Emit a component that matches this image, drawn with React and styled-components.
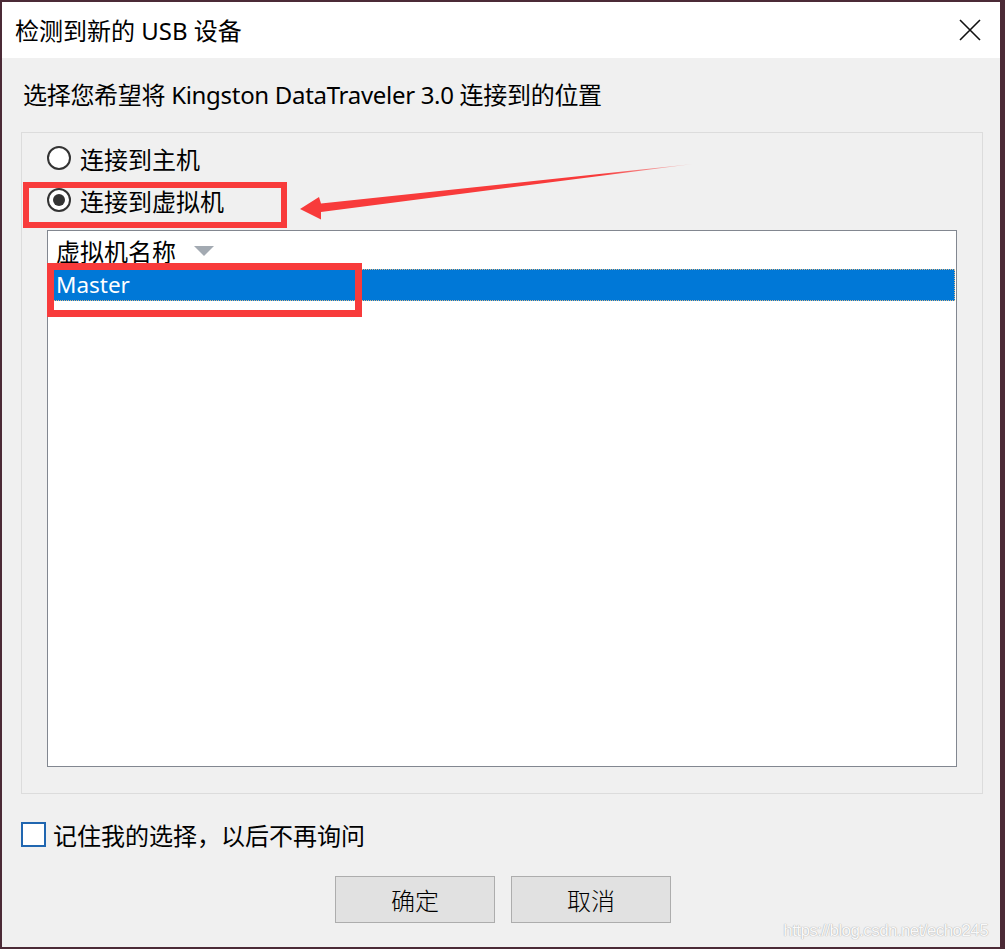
import React from "react";
import styled, { createGlobalStyle } from "styled-components";

const Global = createGlobalStyle`
  html, body { margin: 0; padding: 0; background: #f0f0f0; }
  body { font-family: "Noto Sans", "Noto Sans CJK SC", sans-serif; }
  * { box-sizing: border-box; }
`;

const Window = styled.div`
  position: relative;
  width: 1005px;
  height: 949px;
  border: 2px solid #4b2a36;
  border-right-width: 5px;
  display: flex;
  flex-direction: column;
  background: #f0f0f0;
  color: #000;
  font-size: 24px;
`;

const TitleBar = styled.div`
  height: 56px;
  flex: none;
  background: #fff;
  display: flex;
  align-items: center;
  justify-content: space-between;
  padding: 0 0 0 13px;
`;

const Title = styled.div`
  font-size: 24px;
  line-height: 32px;
  margin-top: 1px;
`;

const CloseButton = styled.div`
  width: 58px;
  height: 56px;
  display: flex;
  align-items: center;
  justify-content: center;
  margin-right: 1px;
`;

const Body = styled.div`
  flex: 1;
  display: flex;
  flex-direction: column;
  padding: 21px 17px 0 19px;
`;

const Instruction = styled.div`
  line-height: 32px;
  padding-left: 2px;
  letter-spacing: -0.3px;
`;

const GroupBox = styled.div`
  margin-top: 21px;
  height: 662px;
  border: 1px solid #dcdcdc;
  display: flex;
  flex-direction: column;
  padding: 7px 25px 26px 25px;
`;

const RadioRow = styled.label`
  display: flex;
  align-items: center;
  height: 36px;
  gap: 9px;
  margin-top: ${(p) => (p.$first ? 0 : 6)}px;
`;

const RadioCircle = styled.span`
  width: 24px;
  height: 24px;
  border-radius: 50%;
  border: 2px solid #333;
  background: #fff;
  display: flex;
  align-items: center;
  justify-content: center;
  flex: none;
  &::after {
    content: "";
    width: 12px;
    height: 12px;
    border-radius: 50%;
    background: ${(p) => (p.$checked ? "#333" : "transparent")};
  }
`;

const ListView = styled.div`
  margin-top: 12px;
  flex: 1;
  background: #fff;
  border: 1px solid #828790;
  display: flex;
  flex-direction: column;
`;

const ListHeader = styled.div`
  height: 38px;
  display: flex;
  align-items: center;
  padding-left: 8px;
  gap: 18px;
`;

const SortArrow = styled.span`
  width: 0;
  height: 0;
  border-left: 10px solid transparent;
  border-right: 10px solid transparent;
  border-top: 10px solid #a3aab2;
  margin-top: 2px;
`;

const ListRow = styled.div`
  height: 32px;
  display: flex;
  align-items: center;
  padding-left: 7px;
  margin-right: 1px;
  font-size: 22.5px;
  background: ${(p) => (p.$selected ? "#0078d7" : "transparent")};
  color: ${(p) => (p.$selected ? "#fff" : "#000")};
  border: 1px dotted ${(p) => (p.$selected ? "#d9b98a" : "transparent")};
  line-height: 30px;
`;

const CheckRow = styled.label`
  margin-top: 27px;
  display: flex;
  align-items: center;
  gap: 7px;
  height: 26px;
`;

const CheckBox = styled.span`
  width: 25px;
  height: 25px;
  border: 2px solid #2066b0;
  background: #fff;
  flex: none;
`;

const ButtonRow = styled.div`
  margin-top: 29px;
  display: flex;
  justify-content: center;
  gap: 16px;
  padding-left: 2px;
`;

const Button = styled.button`
  width: 160px;
  height: 47px;
  background: #e1e1e1;
  border: 1px solid #adadad;
  font-family: "Noto Sans CJK SC", sans-serif;
  font-size: 24px;
  font-weight: 300;
  color: #000;
  padding: 0;
`;

const Watermark = styled.div`
  position: absolute;
  right: 12px;
  bottom: 6px;
  font-family: "Liberation Sans", Arial, sans-serif;
  font-size: 17px;
  letter-spacing: -0.6px;
  color: rgba(255, 255, 255, 0.95);
  text-shadow: 0 0 1px #a8a8a8, 0 0 1px #bcbcbc;
`;

const Overlay = styled.svg`
  position: absolute;
  left: -2px;
  top: -2px;
  width: 1005px;
  height: 949px;
  pointer-events: none;
`;

export default function App() {
  return (
    <>
      <Global />
      <Window>
        <TitleBar>
          <Title>检测到新的 USB 设备</Title>
          <CloseButton>
            <svg width="22" height="22" viewBox="0 0 22 22">
              <path d="M1 1 L21 21 M21 1 L1 21" stroke="#111" strokeWidth="1.6" fill="none" />
            </svg>
          </CloseButton>
        </TitleBar>
        <Body>
          <Instruction>选择您希望将 Kingston DataTraveler 3.0 连接到的位置</Instruction>
          <GroupBox>
            <RadioRow $first>
              <RadioCircle />
              连接到主机
            </RadioRow>
            <RadioRow>
              <RadioCircle $checked />
              连接到虚拟机
            </RadioRow>
            <ListView>
              <ListHeader>
                虚拟机名称
                <SortArrow />
              </ListHeader>
              <ListRow $selected>Master</ListRow>
            </ListView>
          </GroupBox>
          <CheckRow>
            <CheckBox />
            记住我的选择，以后不再询问
          </CheckRow>
          <ButtonRow>
            <Button>确定</Button>
            <Button>取消</Button>
          </ButtonRow>
        </Body>
        <Watermark>https://blog.csdn.net/echo245</Watermark>
        <Overlay viewBox="0 0 1005 949">
          <defs>
            <linearGradient id="fade" x1="320" y1="0" x2="693" y2="0" gradientUnits="userSpaceOnUse">
              <stop offset="0" stopColor="#f83b3b" stopOpacity="1" />
              <stop offset="0.75" stopColor="#f83b3b" stopOpacity="1" />
              <stop offset="1" stopColor="#f83b3b" stopOpacity="0.2" />
            </linearGradient>
          </defs>
          <rect x="26" y="185" width="258" height="40" fill="none" stroke="#f83b3b" strokeWidth="6" />
          <rect x="50.5" y="266.5" width="308" height="47" fill="none" stroke="#f83b3b" strokeWidth="7" />
          <polygon points="300,209 319,197 321,203.5 693,164 321,212 321,219.5" fill="url(#fade)" />
        </Overlay>
      </Window>
    </>
  );
}
